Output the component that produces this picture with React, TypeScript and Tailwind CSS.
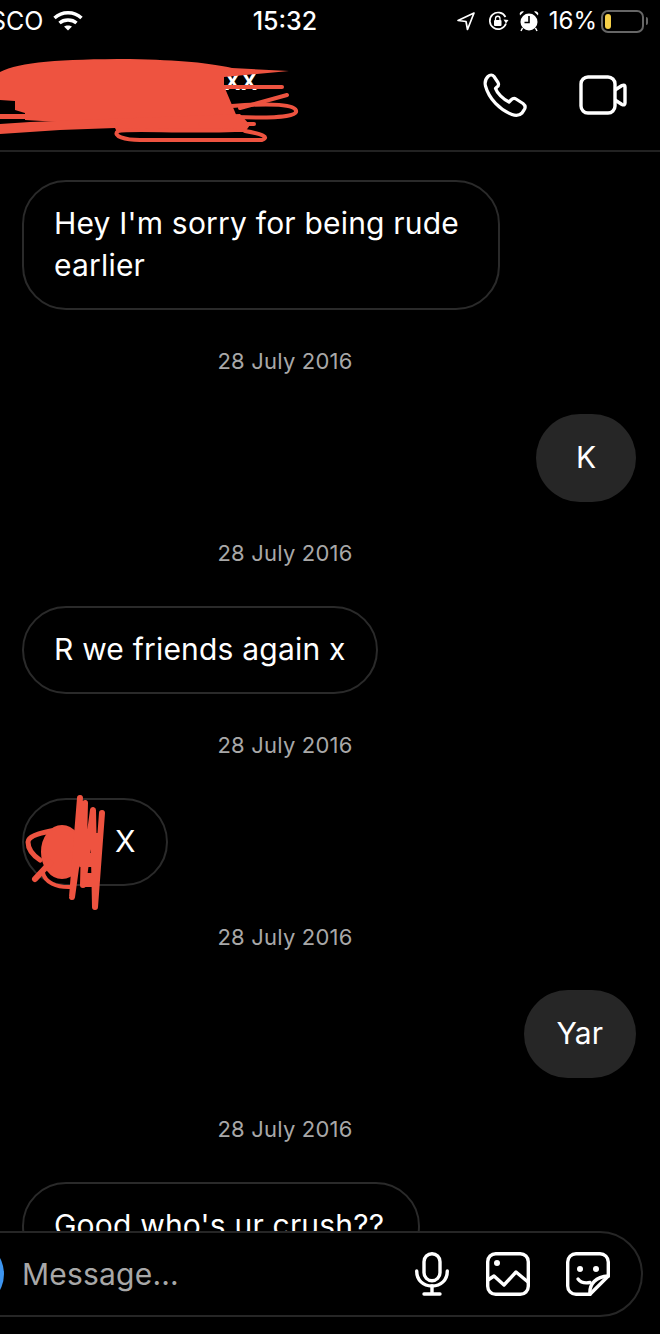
import React from "react";

const RED = "#ee5340";

function DateRow() {
  return (
    <div className="h-[104px] shrink-0 mr-[88px] pb-[2px] flex items-center justify-center text-[22px] tracking-[0.2px] text-[#a8a8a8]">
      28 July 2016
    </div>
  );
}

function Incoming({ children, className = "" }: { children: React.ReactNode; className?: string }) {
  return (
    <div className={"self-start shrink-0 rounded-[44px] border-2 border-[#2a2a2a] pt-[20px] pb-[22px] text-[30px] tracking-[0.2px] leading-[42px] text-white " + className}>
      {children}
    </div>
  );
}

function Outgoing({ children }: { children: React.ReactNode }) {
  return (
    <div className="self-end shrink-0 min-w-[100px] text-center rounded-[44px] bg-[#262626] px-[33px] pt-[21px] pb-[23px] text-[30px] leading-[44px] text-white">
      {children}
    </div>
  );
}

function Wifi() {
  return (
    <svg width="30" height="22" viewBox="0 0 30 22" fill="none" stroke="#fff" strokeWidth="3.4">
      <path d="M1.5 8 C9 1 21 1 28.5 8" />
      <path d="M6.5 13 C11 9 19 9 23.5 13" />
      <path d="M15 20.5 L11 16.5 C13 15 17 15 19 16.5 Z" fill="#fff" stroke="none" />
    </svg>
  );
}

function StatusRight() {
  return (
    <div className="flex items-center">
      <svg width="20" height="20" viewBox="0 0 20 20" fill="none" stroke="#fff" strokeWidth="1.7" strokeLinejoin="round" className="mr-[12px]">
        <path d="M18 2 L2 9.5 L10 10.5 L11.5 18.5 Z" />
      </svg>
      <svg width="22" height="20" viewBox="0 0 22 20" fill="none" stroke="#fff" strokeWidth="1.7" className="mr-[9px]">
        <path d="M18 12.5 A8.3 8.3 0 1 1 17.5 6" />
        <path d="M15.5 8.5 L20.5 9 L18 12.5 Z" fill="#fff" stroke="none" />
        <rect x="6" y="9" width="7.5" height="6" rx="1" fill="#fff" stroke="none" />
        <path d="M7.5 9 V7.5 A2.2 2.2 0 0 1 12 7.5 V9" strokeWidth="1.3" />
      </svg>
      <svg width="20" height="22" viewBox="0 0 20 22" className="mr-[10px]">
        <circle cx="10" cy="12" r="8.5" fill="#fff" />
        <path d="M1 5.5 L5 1.5 A3 3 0 0 0 1 5.5 Z M19 5.5 L15 1.5 A3 3 0 0 1 19 5.5 Z" fill="#fff" />
        <path d="M10 6 V12.5 H5.5" fill="none" stroke="#000" strokeWidth="1.6" />
        <path d="M3.5 18 L2 21 M16.5 18 L18 21" stroke="#fff" strokeWidth="1.5" />
      </svg>
      <span className="text-[24px] leading-[30px] text-white mr-[4px]">16%</span>
      <div className="relative w-[43px] h-[23px] rounded-[7px] border-2 border-[#666] mr-[2px]">
        <div className="absolute left-[2px] top-[2px] w-[6px] h-[15px] rounded-[3px] bg-[#f5cf48]" />
      </div>
      <div className="w-[2px] h-[8px] rounded-r bg-[#666]" />
    </div>
  );
}

function Phone() {
  return (
    <svg width="45" height="45" viewBox="0 0 45 45" fill="none" stroke="#fff" strokeWidth="3.2" strokeLinejoin="round">
      <path d="M5 3.5 C7 1.5 9.5 1.5 11 3.5 L15 9.5 C16 11.5 15.5 13 14 14 L12.5 15.5 C14 20 20 26 26 29 L28 27 C29.5 25.5 31.5 25 33 26 L40 30.5 C42.5 32.5 42.5 35 41 37 L39 40 C36.5 42.5 33 43 29 41.5 C17 37 6 26 2.5 13 C1.5 9 2.5 6 5 3.5 Z" />
    </svg>
  );
}

function Video() {
  return (
    <svg width="48" height="40" viewBox="0 0 48 40" fill="none" stroke="#fff" strokeWidth="3.4" strokeLinejoin="round">
      <rect x="2" y="2" width="34" height="36" rx="7" />
      <path d="M36 15 L43 10.5 C45 9.5 46 10.5 46 12 V28 C46 29.5 45 30.5 43 29.5 L36 25" />
    </svg>
  );
}

function Mic() {
  return (
    <svg width="34" height="44" viewBox="0 0 34 44" fill="none" stroke="#fff" strokeWidth="3.4" strokeLinecap="round">
      <rect x="9" y="1.7" width="16" height="27" rx="8" />
      <path d="M1.7 19 C1.7 28 8 34 17 34 C26 34 32.3 28 32.3 19" />
      <path d="M17 34 V41.5 M9 42 H25" />
    </svg>
  );
}

function ImageIcon() {
  return (
    <svg width="44" height="44" viewBox="0 0 44 44" fill="none" stroke="#fff" strokeWidth="3.4" strokeLinejoin="round" strokeLinecap="round">
      <rect x="1.7" y="1.7" width="40.6" height="40.6" rx="8" />
      <circle cx="11" cy="11" r="3" fill="#fff" stroke="none" />
      <path d="M2 28 L8 24 L18 33 L30 20 L42 30" />
    </svg>
  );
}

function Sticker() {
  return (
    <svg width="44" height="44" viewBox="0 0 44 44" fill="none" stroke="#fff" strokeWidth="3.4" strokeLinejoin="round" strokeLinecap="round">
      <path d="M42.3 24 V10 A8.3 8.3 0 0 0 34 1.7 H10 A8.3 8.3 0 0 0 1.7 10 V34 A8.3 8.3 0 0 0 10 42.3 H24 Z" />
      <path d="M24 42.3 C23 32 30 24.5 42.3 24" />
      <path d="M12 27 C15 31 19 31.5 24 30.5" />
      <circle cx="14" cy="17" r="3" fill="#fff" stroke="none" />
      <circle cx="30" cy="17" r="3" fill="#fff" stroke="none" />
    </svg>
  );
}

function HeaderScribble() {
  return (
    <svg className="absolute left-0 top-[-40px]" width="300" height="150" viewBox="0 0 300 150" fill="none">
      <path d="M0 72 C20 62 60 59 130 59 C180 60 210 63 232 68 L289 71 L224 77 L224 86 L232 105 L240 124 L130 127 L60 122 L25 120 L25 113 L15 110 L15 101 L0 100 Z" fill={RED} />
      <path d="M0 114 L30 114 L30 119 L0 119 Z" fill={RED} />
      <path d="M0 124 L30 122 L240 114 L250 125 L245 132 L117 132 L115 128 L60 130 L0 134 Z" fill={RED} />
      <path d="M224 87 L282 87" stroke={RED} strokeWidth="4" strokeLinecap="round" />
      <path d="M240 108 L287 95" stroke={RED} strokeWidth="4" strokeLinecap="round" />
      <path d="M232 106 C270 103 298 104 296 112 C294 118 260 118 235 117" stroke={RED} strokeWidth="4" strokeLinecap="round" />
      <path d="M200 124 L254 124" stroke={RED} strokeWidth="4" strokeLinecap="round" />
      <path d="M235 130 C180 132 130 128 118 131 C112 136 125 140 140 140 L262 140 C270 137 262 134 245 131" stroke={RED} strokeWidth="4" strokeLinecap="round" />
    </svg>
  );
}

function XScribble() {
  return (
    <svg className="absolute left-[-2px] top-[-8px]" width="100" height="125" viewBox="0 0 100 125" fill="none" stroke={RED} strokeLinecap="round" strokeLinejoin="round">
      <path d="M38 40 C22 42 8 46 8 52 C8 60 14 66 20 70" strokeWidth="5" />
      <ellipse cx="42" cy="62" rx="20" ry="26" fill={RED} strokeWidth="2" />
      <path d="M15 89 L30 73" strokeWidth="6" />
      <path d="M23 83 C25 92 36 98 52 97" strokeWidth="4" />
      <path d="M60 8 L52 107 L65 13 L63 95 L73 20 L75 117 L82 23 L75 117" strokeWidth="6" />
      <path d="M60 50 L80 50 M60 70 L80 70 M62 90 L78 90" strokeWidth="14" strokeLinecap="butt" />
    </svg>
  );
}

export default function App() {
  return (
    <div
      className="relative w-[660px] h-[1334px] bg-black overflow-hidden flex flex-col"
      style={{ fontFamily: "Inter, 'Liberation Sans', sans-serif" }}
    >
      <div className="h-[40px] shrink-0 flex items-center justify-between pl-0 pr-[12px] pt-[2px]">
        <div className="flex items-center w-[190px] ml-[-10px]">
          <span className="text-[25px] leading-[30px] text-white mr-[10px]">SCO</span>
          <Wifi />
        </div>
        <span className="text-[25px] leading-[30px] font-medium text-white ml-[-66px]">15:32</span>
        <StatusRight />
      </div>

      <div className="relative h-[112px] shrink-0 border-b-2 border-[#222] flex items-center justify-end pr-[33px] gap-[51px]">
        <span className="absolute left-[224px] top-[24px] text-[30px] font-medium leading-[30px] text-white">xx</span>
        <HeaderScribble />
        <Phone />
        <Video />
      </div>

      <div className="flex-1 min-h-0 overflow-hidden flex flex-col pl-[22px] pr-[24px] pt-[28px]">
        <Incoming className="w-[478px] pl-[30px] pr-[30px]">Hey I'm sorry for being rude earlier</Incoming>
        <DateRow />
        <Outgoing>K</Outgoing>
        <DateRow />
        <Incoming className="pl-[30px] pr-[30px]">R we friends again x</Incoming>
        <DateRow />
        <div className="relative self-start shrink-0">
          <Incoming className="pl-[91px] pr-[30px]">X</Incoming>
          <XScribble />
        </div>
        <DateRow />
        <Outgoing>Yar</Outgoing>
        <DateRow />
        <Incoming className="pl-[30px] pr-[34px]">Good who's ur crush??</Incoming>
      </div>

      <div className="shrink-0 h-[103px] pb-[17px] bg-black">
        <div className="w-[684px] h-[86px] ml-[-41px] rounded-[43px] border-2 border-[#262626] flex items-center">
          <div className="w-[68px] h-[68px] rounded-full bg-[#3d95f0] ml-[-25px] shrink-0" />
          <span className="ml-[18px] grow text-[30px] tracking-[0.2px] leading-[42px] text-[#a8a8a8]">Message...</span>
          <div className="flex items-center mr-[31px] gap-[37px]">
            <Mic />
            <div className="flex gap-[36px]">
              <ImageIcon />
              <Sticker />
            </div>
          </div>
        </div>
      </div>
    </div>
  );
}
